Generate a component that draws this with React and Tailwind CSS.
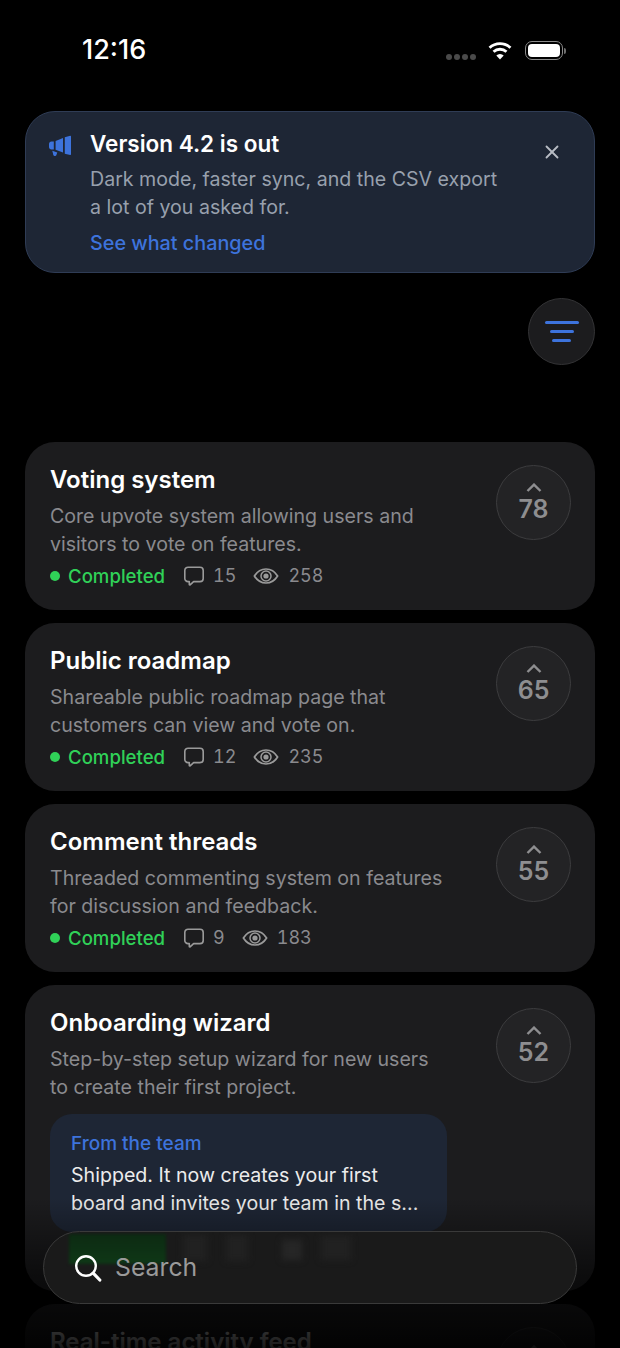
import { X } from 'lucide-react';

const features = [
  { title: 'Voting system', lines: ['Core upvote system allowing users and', 'visitors to vote on features.'], comments: 15, views: 258, votes: 78 },
  { title: 'Public roadmap', lines: ['Shareable public roadmap page that', 'customers can view and vote on.'], comments: 12, views: 235, votes: 65 },
  { title: 'Comment threads', lines: ['Threaded commenting system on features', 'for discussion and feedback.'], comments: 9, views: 183, votes: 55 },
  {
    title: 'Onboarding wizard',
    lines: ['Step-by-step setup wizard for new users', 'to create their first project.'],
    comments: 7,
    views: 168,
    votes: 52,
    note: ['Shipped. It now creates your first', 'board and invites your team in the s...'],
  },
  { title: 'Real-time activity feed', lines: ['Live stream of what your team is doing', 'across every board.'], comments: 6, views: 141, votes: 47 },
];

const Wifi = () => (
  <svg width="26" height="19" viewBox="0 0 26 20" fill="none">
    <path d="M2 7.2a16 16 0 0 1 22 0" stroke="white" strokeWidth="3" />
    <path d="M6.2 11.3a10 10 0 0 1 13.6 0" stroke="white" strokeWidth="3" />
    <path d="M13 19.4l-3.9-4.1a5.6 5.6 0 0 1 7.8 0z" fill="white" />
  </svg>
);

const Battery = () => (
  <div className="flex items-center gap-[1px]">
    <div className="w-[38px] h-[19px] rounded-[7px] border-[1.5px] border-[#8a8a8a] p-[2px]">
      <div className="w-full h-full rounded-[4px] bg-white" />
    </div>
    <div className="w-[2px] h-[6px] rounded-r-sm bg-[#6f6f6f]" />
  </div>
);

const Megaphone = () => (
  <svg width="24" height="24" viewBox="0 0 24 24" fill="#3d73dc">
    <path d="M16.8 3.2l5.4-1.4c.5-.1.8.2.8.7v17.8c0 .5-.3.8-.8.7l-5.4-1.3z" />
    <path d="M15 3.9v14.6L7.6 15.8V7z" />
    <path d="M5.8 7.4v8H3.4C2 15.4 1 14.3 1 13V9.9c0-1.4 1-2.5 2.4-2.5z" />
    <path d="M4.3 16.8l5 1.6-.9 2.6c-.3.9-1.2 1.3-2.1 1-.8-.3-1.2-1.1-1.2-1.9z" />
  </svg>
);

const Bubble = () => (
  <svg width="22" height="22" viewBox="0 0 22 22" fill="none" stroke="#9a9a9a" strokeWidth="1.6" strokeLinejoin="round">
    <path d="M5 2.2h12a3.2 3.2 0 0 1 3.2 3.2v8a3.2 3.2 0 0 1-3.2 3.2h-6.4l-3.5 3.2c-.4.3-.8.1-.8-.4v-2.8H5a3.2 3.2 0 0 1-3.2-3.2v-8A3.2 3.2 0 0 1 5 2.2z" />
  </svg>
);

const Eye = () => (
  <svg width="26" height="18" viewBox="0 0 26 18" fill="none">
    <path d="M1.4 9C4.2 4.4 8.2 2 13 2s8.800 2.400 11.600 7c-2.800 4.600-6.800 7-11.600 7S4.200 13.600 1.400 9z" stroke="#9a9a9a" strokeWidth="1.7" />
    <circle cx="13" cy="9" r="5" stroke="#9a9a9a" strokeWidth="1.5" />
    <circle cx="13" cy="9" r="2.600" fill="#9a9a9a" />
  </svg>
);

const Magnifier = () => (
  <svg width="28" height="28" viewBox="0 0 28 28" fill="none" stroke="white" strokeLinecap="round">
    <circle cx="12" cy="12" r="9.800" strokeWidth="2.400" />
    <path d="M19.200 19.200l6.600 6.800" strokeWidth="3.200" />
  </svg>
);

const VoteButton = ({ votes }) => (
  <div className="mt-[2px] w-[75px] h-[75px] shrink-0 rounded-full bg-[#232325] border border-[#3c3c3e] flex flex-col items-center pt-[17px] text-[#8e8e90]">
    <svg width="16" height="9" viewBox="0 0 16 9" fill="none" stroke="#8e8e90" strokeWidth="2.400">
      <path d="M1.500 8L8 1.600 14.500 8" />
    </svg>
    <span className="mt-[3px] text-[25px] leading-[28px] font-semibold">{votes}</span>
  </div>
);

const FeatureCard = ({ feature }) => (
  <div className="rounded-[30px] bg-[#1c1c1e] pl-[25px] pr-[24px] pt-[21px] pb-[20px] flex justify-between">
    <div>
      <h3 className="text-[24px] leading-[34px] font-semibold text-white">{feature.title}</h3>
      <p className="mt-[5px] text-[19.6px] leading-[28px] text-[#8a8a8e]">
        {feature.lines[0]}
        <br />
        {feature.lines[1]}
      </p>
      {feature.note && (
        <div className="mt-[13px] w-[397px] rounded-[22px] bg-[#1e2635] px-[21px] pt-[16px] pb-[15px]">
          <div className="text-[19px] leading-[28px] font-medium text-[#3d73dc]">From the team</div>
          <p className="mt-[3px] text-[19.6px] leading-[28px] text-[#ececec] whitespace-nowrap">
            {feature.note[0]}
            <br />
            {feature.note[1]}
          </p>
        </div>
      )}
      <div className={`flex items-center text-[18.600px] leading-[28px] ${feature.note ? 'mt-[11px]' : 'mt-[4px]'}`}>
        <span className="w-[10px] h-[10px] rounded-full bg-[#30d158]" />
        <span className="ml-[8px] text-[#30d158] font-medium">Completed</span>
        <span className="ml-[18px]"><Bubble /></span>
        <span className="ml-[8px] text-[18px] text-[#8a8a8e] tabular-nums">{feature.comments}</span>
        <span className="ml-[17px]"><Eye /></span>
        <span className="ml-[9px] text-[18px] text-[#8a8a8e] tabular-nums">{feature.views}</span>
      </div>
    </div>
    <VoteButton votes={feature.votes} />
  </div>
);

export default function App() {
  return (
    <div className="relative w-[620px] h-[1348px] overflow-hidden bg-black" style={{ fontFamily: 'Inter, "Noto Sans", sans-serif' }}>
      <div className="h-[111px] pl-[82px] pr-[54px] pt-[34px] flex justify-between items-start">
        <span className="text-[27px] leading-[32px] font-medium text-white">12:16</span>
        <div className="flex items-start pt-[7px]">
          <div className="flex gap-[2px] mr-[11px] mt-[13px]">
            <span className="w-[6px] h-[6px] rounded-full bg-[#4a4a4a]" />
            <span className="w-[6px] h-[6px] rounded-full bg-[#4a4a4a]" />
            <span className="w-[6px] h-[6px] rounded-full bg-[#4a4a4a]" />
            <span className="w-[6px] h-[6px] rounded-full bg-[#4a4a4a]" />
          </div>
          <Wifi />
          <div className="ml-[12px]"><Battery /></div>
        </div>
      </div>

      <div className="mx-[25px] h-[162px] rounded-[30px] bg-[#1e2635] border border-[#2f3c55] pl-[22px] pr-[31px] pt-[15px] flex">
        <div className="w-[42px] shrink-0 pt-[7px]"><Megaphone /></div>
        <div className="flex-1">
          <div className="text-[22.500px] leading-[34px] font-semibold text-white">Version 4.2 is out</div>
          <p className="mt-[4px] text-[19.600px] leading-[28px] text-[#98a0ad]">
            Dark mode, faster sync, and the CSV export
            <br />
            a lot of you asked for.
          </p>
          <div className="mt-[8px] text-[19.800px] leading-[28px] font-medium text-[#3d73dc]">See what changed</div>
        </div>
        <X size={22} strokeWidth={2} className="mt-[14px] text-[#b8bcc4]" />
      </div>

      <div className="flex justify-end px-[25px] mt-[25px]">
        <div className="w-[67px] h-[67px] rounded-full bg-[#1c1c1e] border border-[#333335] flex flex-col items-center justify-center gap-[6px]">
          <span className="w-[34px] h-[3px] rounded-full bg-[#3d73dc]" />
          <span className="w-[24px] h-[3px] rounded-full bg-[#3d73dc]" />
          <span className="w-[19px] h-[3px] rounded-full bg-[#3d73dc]" />
        </div>
      </div>

      <div className="mt-[77px] mx-[25px] flex flex-col gap-[13px]">
        {features.map((f) => (
          <FeatureCard key={f.title} feature={f} />
        ))}
      </div>

      <div className="absolute left-0 right-0 bottom-0 h-[150px] bg-gradient-to-b from-black/0 via-black/55 to-black/90" />

      <div className="absolute left-[43px] top-[1231px] w-[534px] h-[73px] rounded-full overflow-hidden bg-[#1a1a1a] border border-[#3a3a3a] flex items-center pl-[30px]">
        {/* smeared status row showing through the glass */}
        <div className="absolute left-[25px] top-[2px] w-[97px] h-[30px] bg-gradient-to-b from-[#0c2a12] to-[#0e3716] blur-[1.5px]" />
        <div className="absolute left-[139px] top-[3px] w-[24px] h-[26px] bg-[#212121] blur-[3px]" />
        <div className="absolute left-[182px] top-[3px] w-[22px] h-[26px] bg-[#212121] blur-[3px]" />
        <div className="absolute left-[238px] top-[8px] w-[20px] h-[20px] bg-[#262626] blur-[3px]" />
        <div className="absolute left-[277px] top-[4px] w-[30px] h-[24px] bg-[#212121] blur-[3px]" />
        <div className="relative"><Magnifier /></div>
        <span className="relative ml-[13px] pt-[1px] text-[24.800px] text-[#9a9a9a]">Search</span>
      </div>
    </div>
  );
}
